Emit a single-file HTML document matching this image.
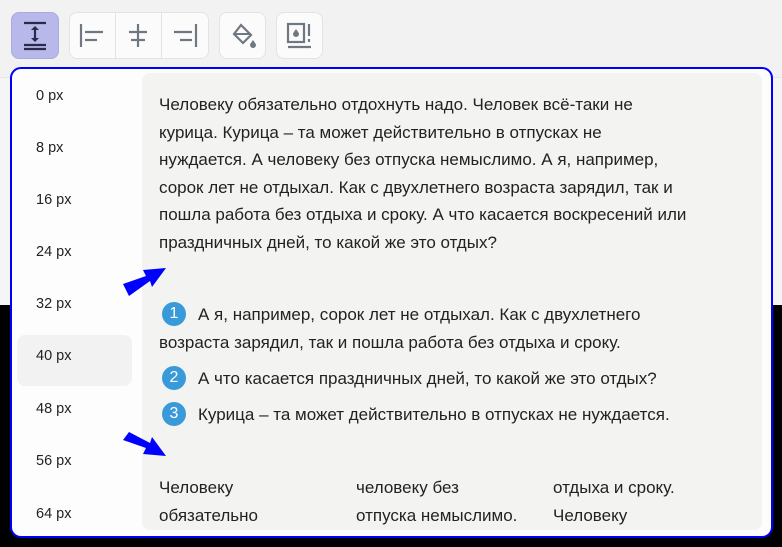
<!DOCTYPE html>
<html><head><meta charset="utf-8"><style>
*{margin:0;padding:0;box-sizing:border-box}
body{width:782px;height:547px;overflow:hidden;background:#000;font-family:"Liberation Sans","DejaVu Sans",sans-serif;position:relative}
.top{position:absolute;left:0;top:0;width:782px;height:305px;background:#f5f5f5}
.bar{position:absolute;left:0;top:0;width:782px;height:78px;background:#f2f2f2;border-bottom:1px solid #e6e6e6}
.btn{position:absolute;top:12px;height:47px;background:#fbfbfb;border:1px solid #e3e3e3;border-radius:8px}
.sel{background:#b8b8ea;border-color:#aaaadd}
.pop{position:absolute;left:10px;top:67px;width:763px;height:471px;border:2px solid #0000ff;border-radius:11px;background:#fdfdfd}
.panel{position:absolute;left:142px;top:73px;width:620px;height:457px;background:#f3f3f2;border-radius:8px}
.it{position:absolute;left:36px;font-size:14.5px;color:#222}
.hl{position:absolute;left:17px;top:335px;width:115px;height:51px;background:#f2f2f2;border-radius:8px}
.t{position:absolute;left:159px;font-size:17px;color:#222;white-space:nowrap}
.c{position:absolute;width:24px;height:24px;border-radius:50%;background:#3a9ad9;color:#fff;font-size:16px;text-align:center;line-height:24px;left:162px}
</style></head><body>
<div class="top"></div>
<div class="bar"></div>
<div class="btn sel" style="left:11px;width:48px"></div>
<svg style="position:absolute;left:11px;top:12px" width="48" height="47"><g stroke="#2a2a4a" stroke-width="2.2" fill="none"><line x1="13" y1="11" x2="35" y2="11"/><line x1="13" y1="33" x2="35" y2="33"/><line x1="13" y1="37" x2="35" y2="37"/><line x1="24" y1="16" x2="24" y2="28"/></g><path d="M20 18l4-4 4 4zM20 26l4 4 4-4z" fill="#2a2a4a"/></svg>
<div class="btn" style="left:69px;width:140px"></div>
<div style="position:absolute;left:115px;top:13px;width:1px;height:45px;background:#e3e3e3"></div>
<div style="position:absolute;left:161px;top:13px;width:1px;height:45px;background:#e3e3e3"></div>
<svg style="position:absolute;left:69px;top:12px" width="140" height="47"><g stroke="#6f7780" stroke-width="2.2"><line x1="12" y1="12" x2="12" y2="35"/><line x1="16" y1="20" x2="34" y2="20"/><line x1="16" y1="28" x2="28" y2="28"/><line x1="69" y1="12" x2="69" y2="35"/><line x1="60" y1="20" x2="78" y2="20"/><line x1="62" y1="28" x2="76" y2="28"/><line x1="127" y1="12" x2="127" y2="35"/><line x1="105" y1="20" x2="123" y2="20"/><line x1="111" y1="28" x2="123" y2="28"/></g></svg>
<div class="btn" style="left:219px;width:47px"></div>
<svg style="position:absolute;left:219px;top:12px" width="47" height="47"><path d="M22 13l10 10-8 8-9-9z" fill="none" stroke="#6f7780" stroke-width="2.2"/><path d="M16 22h16" stroke="#6f7780" stroke-width="2"/><path d="M34 28c-2 3-3 4-3 5a3 3 0 006 0c0-1-1-2-3-5z" fill="#6f7780"/></svg>
<div class="btn" style="left:276px;width:47px"></div>
<svg style="position:absolute;left:276px;top:12px" width="47" height="47"><rect x="12" y="12" width="16" height="18" fill="none" stroke="#6f7780" stroke-width="2.2"/><path d="M20 17c-2 3-3 4-3 5a3 3 0 006 0c0-1-1-2-3-5z" fill="#6f7780"/><g stroke="#6f7780" stroke-width="2.2"><line x1="33" y1="12" x2="33" y2="24"/><line x1="33" y1="27" x2="33" y2="30"/><line x1="12" y1="35" x2="35" y2="35"/></g></svg>
<div class="pop"></div>
<div class="hl"></div>
<div class="it" style="top:88px">0 px</div>
<div class="it" style="top:140px">8 px</div>
<div class="it" style="top:192px">16 px</div>
<div class="it" style="top:244px">24 px</div>
<div class="it" style="top:296px">32 px</div>
<div class="it" style="top:348px">40 px</div>
<div class="it" style="top:401px">48 px</div>
<div class="it" style="top:453px">56 px</div>
<div class="it" style="top:506px">64 px</div>
<div class="panel"></div>
<div class="t" style="top:95px">Человеку обязательно отдохнуть надо. Человек всё-таки не</div>
<div class="t" style="top:123px">курица. Курица – та может действительно в отпусках не</div>
<div class="t" style="top:150px">нуждается. А человеку без отпуска немыслимо. А я, например,</div>
<div class="t" style="top:178px">сорок лет не отдыхал. Как с двухлетнего возраста зарядил, так и</div>
<div class="t" style="top:205px">пошла работа без отдыха и сроку. А что касается воскресений или</div>
<div class="t" style="top:233px">праздничных дней, то какой же это отдых?</div>
<svg style="position:absolute;left:0;top:0" width="200" height="547"><polygon points="123,284 146,276 143,270 166,268 152,287 150,281 129,296" fill="#0000ff"/><polygon points="129,432 150,443 152,437 166,456 143,454 146,448 123,440" fill="#0000ff"/></svg>
<div class="c" style="top:302px">1</div>
<div class="t" style="left:198px;top:305px">А я, например, сорок лет не отдыхал. Как с двухлетнего</div>
<div class="t" style="top:333px">возраста зарядил, так и пошла работа без отдыха и сроку.</div>
<div class="c" style="top:366px">2</div>
<div class="t" style="left:198px;top:369px">А что касается праздничных дней, то какой же это отдых?</div>
<div class="c" style="top:402px">3</div>
<div class="t" style="left:198px;top:405px">Курица – та может действительно в отпусках не нуждается.</div>
<div class="t" style="top:478px">Человеку</div>
<div class="t" style="top:506px">обязательно</div>
<div class="t" style="left:356px;top:478px">человеку без</div>
<div class="t" style="left:356px;top:506px">отпуска немыслимо.</div>
<div class="t" style="left:553px;top:478px">отдыха и сроку.</div>
<div class="t" style="left:553px;top:506px">Человеку</div>
</body></html>
